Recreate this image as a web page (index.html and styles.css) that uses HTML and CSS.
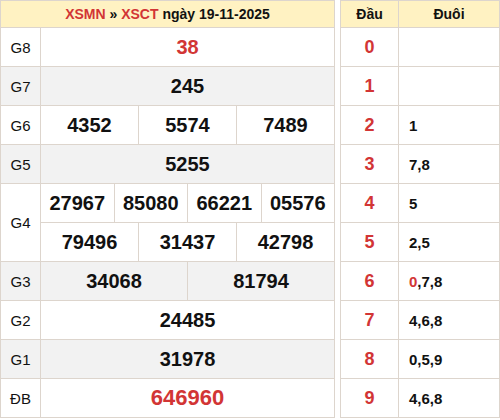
FILE: index.html
```html
<!DOCTYPE html>
<html lang="vi">
<head>
<meta charset="utf-8">
<title>XSCT 19-11-2025</title>
<link rel="stylesheet" href="styles.css">
</head>
<body>
<div class="page">
  <div class="kq">
    <div class="cell head">
      <span class="title"><span class="red">XSMN</span> » <span class="red">XSCT</span> ngày 19-11-2025</span>
    </div>

    <div class="cell label">G8</div>
    <div class="cell num red s12">38</div>

    <div class="cell label alt">G7</div>
    <div class="cell num alt s12">245</div>

    <div class="cell label">G6</div>
    <div class="cell num s4">4352</div>
    <div class="cell num s4">5574</div>
    <div class="cell num s4">7489</div>

    <div class="cell label alt">G5</div>
    <div class="cell num alt s12">5255</div>

    <div class="cell label g4">G4</div>
    <div class="cell num s3">27967</div>
    <div class="cell num s3">85080</div>
    <div class="cell num s3">66221</div>
    <div class="cell num s3">05576</div>
    <div class="cell num s4">79496</div>
    <div class="cell num s4">31437</div>
    <div class="cell num s4">42798</div>

    <div class="cell label alt">G3</div>
    <div class="cell num alt s6">34068</div>
    <div class="cell num alt s6">81794</div>

    <div class="cell label">G2</div>
    <div class="cell num s12">24485</div>

    <div class="cell label alt">G1</div>
    <div class="cell num alt s12">31978</div>

    <div class="cell label">ĐB</div>
    <div class="cell num red db s12">646960</div>
  </div>

  <div class="loto">
    <div class="cell head">Đầu</div>
    <div class="cell head">Đuôi</div>

    <div class="cell dau">0</div><div class="cell duoi"></div>
    <div class="cell dau">1</div><div class="cell duoi"></div>
    <div class="cell dau">2</div><div class="cell duoi">1</div>
    <div class="cell dau">3</div><div class="cell duoi">7,8</div>
    <div class="cell dau">4</div><div class="cell duoi">5</div>
    <div class="cell dau">5</div><div class="cell duoi">2,5</div>
    <div class="cell dau">6</div><div class="cell duoi"><span><span class="red">0</span>,7,8</span></div>
    <div class="cell dau">7</div><div class="cell duoi">4,6,8</div>
    <div class="cell dau">8</div><div class="cell duoi">0,5,9</div>
    <div class="cell dau">9</div><div class="cell duoi">4,6,8</div>
  </div>
</div>
</body>
</html>
```

FILE: styles.css
```css
* {
  box-sizing: border-box;
}

html, body {
  margin: 0;
  padding: 0;
  background: #ffffff;
}

body {
  font-family: "Liberation Sans", Arial, sans-serif;
  color: #111111;
}

.page {
  display: flex;
  gap: 5px;
  align-items: flex-start;
}

.kq {
  width: 335px;
  display: grid;
  grid-template-columns: 40px repeat(12, 1fr);
  grid-template-rows: 27px repeat(10, 39px);
  border-top: 1px solid #ddd5cd;
  border-left: 1px solid #ddd5cd;
}

.loto {
  width: 160px;
  display: grid;
  grid-template-columns: 58px 101px;
  grid-template-rows: 27px repeat(10, 39px);
  border-top: 1px solid #ddd5cd;
  border-left: 1px solid #ddd5cd;
}

.cell {
  border-right: 1px solid #ddd5cd;
  border-bottom: 1px solid #ddd5cd;
  display: flex;
  align-items: center;
  justify-content: center;
}

.head {
  background: #fff2c2;
  font-weight: bold;
  font-size: 14px;
  color: #111111;
}

.kq .head {
  grid-column: 1 / -1;
}

.title {
  white-space: pre;
}

.red {
  color: #d23535;
}

.label {
  font-size: 15px;
  color: #111111;
}

.g4 {
  grid-row: span 2;
}

.num {
  font-size: 20px;
  font-weight: bold;
}

.num.red {
  color: #d23535;
}

.db {
  font-size: 22px;
}

.alt {
  background: #f2f2f2;
}

.s12 { grid-column: span 12; }
.s6 { grid-column: span 6; }
.s4 { grid-column: span 4; }
.s3 { grid-column: span 3; }

.dau {
  font-size: 18px;
  font-weight: bold;
  color: #d23535;
}

.duoi {
  justify-content: flex-start;
  padding-left: 10px;
  font-size: 15px;
  font-weight: bold;
}
```
